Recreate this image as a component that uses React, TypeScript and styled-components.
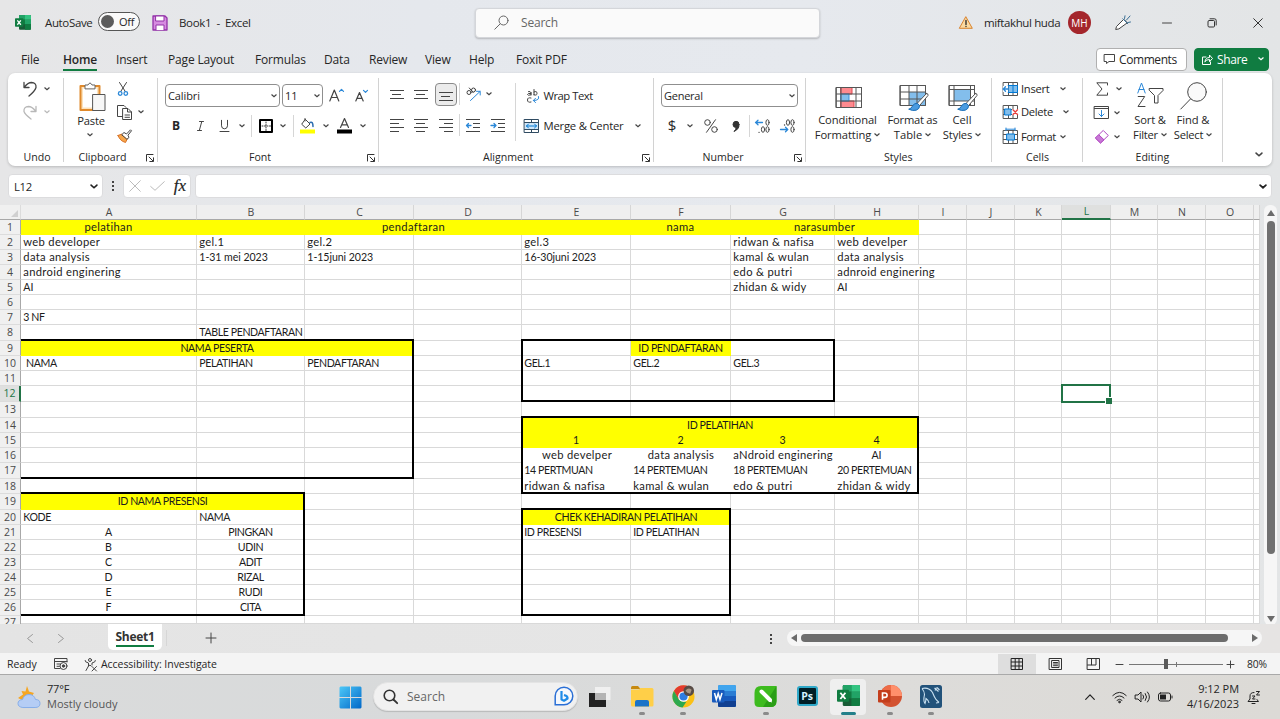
import React from "react";
import styled, { createGlobalStyle } from "styled-components";

const Global = createGlobalStyle`
  * { box-sizing: border-box; }
  html, body { margin: 0; padding: 0; }
  body {
    width: 1280px; height: 719px; overflow: hidden;
    font-family: "Open Sans", "Noto Sans", sans-serif;
    font-size: 11.5px; color: #262626; background: #e6e6e6;
  }
  svg { display: block; overflow: visible; flex: none; }
`;

/* ---------- shell ---------- */
const Window = styled.div`
  width: 1280px; height: 719px; display: flex; flex-direction: column;
  background: linear-gradient(90deg, #e6e6e7 0, #e5e8ed 420px, #e6e9ee 800px, #e3e5e6 1280px);
`;
const TitleBar = styled.header`
  height: 45px; display: grid; align-items: center; flex: none;
  grid-template-columns: 44px 54px 54px 27px 296px 484px 25px 84px 47px 33px 46px 46px 40px;
`;
const Lead = styled.div<{ $x?: number }>`
  display: flex; align-items: center; padding-left: ${(p) => p.$x ?? 0}px; white-space: nowrap;
`;
const Txt = styled.span<{ $s?: number; $ls?: number; $c?: string; $w?: number }>`
  font-size: ${(p) => p.$s ?? 11.5}px; letter-spacing: ${(p) => p.$ls ?? 0}px;
  color: ${(p) => p.$c ?? "#262626"}; font-weight: ${(p) => p.$w ?? 400};
  white-space: nowrap; line-height: 15px;
`;
const Toggle = styled.div`
  width: 42px; height: 19px; border: 1px solid #555; border-radius: 10px; background: #fafafa; margin-top: -2px;
  display: flex; align-items: center; padding-left: 2px; gap: 5px;
`;
const Knob = styled.i`width: 13px; height: 13px; border-radius: 50%; background: #5c5c5c;`;
const SearchBox = styled.div`
  width: 345px; height: 30px; background: #fafafa; border-radius: 4px; border: 1px solid #d4d6da;
  box-shadow: 0 1px 2px rgba(0,0,0,.22); display: flex; align-items: center; padding-left: 18px; gap: 12px;
`;
const Avatar = styled.div`
  width: 23px; height: 23px; border-radius: 50%; background: #a4262c; color: #fff;
  display: grid; place-items: center; font-size: 10px;
`;
const TabRow = styled.nav`
  height: 28px; flex: none; display: flex; padding-left: 21px; align-items: center;
`;
const Tab = styled.div<{ $w: number; $on?: boolean }>`
  width: ${(p) => p.$w}px; font-size: 12px; line-height: 18px; letter-spacing: -.17px; white-space: nowrap;
  font-weight: ${(p) => (p.$on ? 600 : 400)};
  span { display: inline-block; padding: 3px 0 0; height: 23px; border-bottom: 2px solid ${(p) => (p.$on ? "#107c41" : "transparent")}; }
`;
const TopButton = styled.div<{ $green?: boolean }>`
  height: 23px; width: ${(p) => (p.$green ? 75 : 91)}px; border-radius: 4px; display: flex; align-items: center;
  gap: 4px; padding-left: 7px; font-size: 12px; flex: none;
  margin-left: ${(p) => (p.$green ? 7 : 0)}px;
  border: 1px solid ${(p) => (p.$green ? "#107c41" : "#b0b0b0")};
  background: ${(p) => (p.$green ? "#107c41" : "#fff")}; color: ${(p) => (p.$green ? "#fff" : "#262626")};
`;
const Fill = styled.div`flex: 1;`;

/* ---------- ribbon ---------- */
const Ribbon = styled.section`
  height: 93px; margin: 0 8px; background: #fff; border-radius: 7px; flex: none; display: flex;
  box-shadow: 0 1px 3px rgba(0,0,0,.2); padding: 5px 0 4px;
`;
const Group = styled.div<{ $w: number }>`
  width: ${(p) => p.$w}px; height: 84px; border-right: 1px solid #d2d2d2; display: flex; flex-direction: column; flex: none;
`;
const GroupBody = styled.div`height: 72px; display: flex; flex: none;`;
const GroupFoot = styled.div<{ $l?: number }>`
  height: 15px; display: flex; flex: none; align-items: center; justify-content: space-between; padding: 0 3px 0 ${(p) => p.$l ?? 0}px;
  font-size: 10.6px; line-height: 15px; white-space: nowrap;
`;
const Col = styled.div<{ $w?: number; $t?: number; $center?: boolean }>`
  display: flex; flex-direction: column; flex: none; padding-top: ${(p) => p.$t ?? 0}px;
  width: ${(p) => (p.$w ? p.$w + "px" : "auto")}; align-items: ${(p) => (p.$center ? "center" : "stretch")};
`;
const Row = styled.div<{ $h: number; $l?: number }>`
  height: ${(p) => p.$h}px; display: flex; flex: none; align-items: center; padding-left: ${(p) => p.$l ?? 0}px;
`;
const Slot = styled.div<{ $w: number; $left?: boolean }>`
  width: ${(p) => p.$w}px; display: flex; align-items: center; flex: none; white-space: nowrap;
  justify-content: ${(p) => (p.$left ? "flex-start" : "center")};
`;
const Rule = styled.i<{ $h: number; $ml?: number }>`
  width: 1px; height: ${(p) => p.$h}px; background: #d6d6d6; flex: none; margin-left: ${(p) => p.$ml ?? 0}px;
`;
const Combo = styled.div<{ $w: number; $mr?: number }>`
  width: ${(p) => p.$w}px; height: 23px; border: 1px solid #8f8f8f; border-radius: 4px; background: #fff; flex: none;
  display: flex; align-items: center; justify-content: space-between; padding: 0 2px; margin-right: ${(p) => p.$mr ?? 0}px;
  font-size: 11px;
`;
const Pressed = styled.div`
  width: 22px; height: 23px; border: 1px solid #8a8a8a; border-radius: 4px; background: #ebebeb; display: grid; place-items: center; padding-top: 5px;
`;
const BigLabel = styled.div<{ $w: number }>`
  width: ${(p) => p.$w}px; height: 15px; display: flex; align-items: center; justify-content: center; gap: 3px;
  font-size: 11.2px; line-height: 15px; white-space: nowrap; flex: none;
`;
const RibbonEnd = styled.div`flex: 1; display: flex; align-items: flex-end; justify-content: flex-end; padding: 0 9px 5px 0;`;

/* ---------- formula bar ---------- */
const FormulaBar = styled.div`height: 39px; padding: 8px 8px 0; display: flex; flex: none; align-items: flex-start;`;
const Field = styled.div<{ $w: number }>`
  width: ${(p) => p.$w}px; height: 24px; background: #fff; border-radius: 4px; border: 1px solid #dcdcde;
  display: flex; align-items: center; justify-content: space-between; padding: 0 4px 0 5px; flex: none;
`;
const Fx = styled.span`font: italic 400 17px/20px "Liberation Serif", serif; color: #222; -webkit-text-stroke: .2px #222;`;
const Dots = styled.div<{ $h: number }>`
  height: ${(p) => p.$h}px; width: 20px; display: flex; flex-direction: column; gap: 2.4px; align-items: center; justify-content: center; flex: none;
  i { width: 2px; height: 2px; background: #444; }
`;

/* ---------- sheet ---------- */
const colWidths = [176, 108, 109, 108, 109, 100, 104, 84, 48, 48, 47, 49, 47, 48, 48, 6];
const rowHeights = [15, 15, 15, 15, 15, 15, 15, 16, 15, 15, 15, 16, 16, 15, 15, 15, 16, 15, 16, 15, 15, 15, 15, 15, 15, 16, 8];
const letters = "ABCDEFGHIJKLMNO".split("");

const SheetArea = styled.div`height: 419px; display: flex; flex: none;`;
const Grid = styled.div`
  width: 1260px; height: 419px; display: grid; overflow: hidden; background: #fff; flex: none;
  grid-template-columns: 21px ${colWidths.map((w) => w + "px").join(" ")};
  grid-template-rows: 15px ${rowHeights.map((h) => h + "px").join(" ")};
  font-family: Lato, "Open Sans", sans-serif; color: #1c1c1c;
`;
const Corner = styled.div`
  grid-area: 1 / 1; background: #f0f0f0; border-right: 1px solid #dcdcdc; border-bottom: 1px solid #a8a8a8;
  display: flex; align-items: flex-end; justify-content: flex-end; padding: 0 2px 2px 0;
`;
const Head = styled.div<{ $on?: boolean }>`
  background: ${(p) => (p.$on ? "#dfe0df" : "#efefef")}; color: ${(p) => (p.$on ? "#217346" : "#4a4a4a")};
  border-right: 1px solid #d6d6d6; border-bottom: ${(p) => (p.$on ? "2px solid #217346" : "1px solid #a8a8a8")};
  display: flex; justify-content: center; align-items: center; line-height: 13px; font-size: 10.5px; padding-left: 1px;
  font-family: "Open Sans", sans-serif;
`;
const RowHead = styled.div<{ $on?: boolean; $last?: boolean }>`
  background: ${(p) => (p.$on ? "#dfe0df" : "#f0f0f0")}; color: ${(p) => (p.$on ? "#217346" : "#4a4a4a")};
  border-bottom: ${(p) => (p.$last ? 0 : 1)}px solid #dcdcdc; border-right: ${(p) => (p.$on ? "2px solid #217346" : "1px solid #a8a8a8")};
  display: flex; justify-content: center; align-items: ${(p) => (p.$last ? "flex-start" : "center")};
  line-height: 13px; font-size: 10.5px;
  font-family: "Open Sans", sans-serif;
`;
const Blank = styled.div`border-right: 1px solid #d9d9d9; border-bottom: 1px solid #d9d9d9;`;
const Cell = styled.div<{ $align?: string; $pl?: number; $ls?: number; $s: number; $pb: number; $bg?: string; $inset?: boolean }>`
  display: flex; align-items: center; line-height: 13px; white-space: pre; z-index: 1; font-size: ${(p) => p.$s}px;
  justify-content: ${(p) => (p.$align === "c" ? "center" : "flex-start")};
  padding: 0 ${(p) => (p.$align === "c" ? 1 : 0)}px ${(p) => p.$pb - (p.$inset ? 1 : 0)}px ${(p) => p.$pl ?? (p.$align === "c" ? 0 : 2.3)}px;
  letter-spacing: ${(p) => p.$ls ?? 0}px;
  background: ${(p) => p.$bg ?? "transparent"};
  ${(p) => (p.$inset ? "margin: 0 1px 1px 0;" : "")}
`;
const Box = styled.div<{ $open?: boolean }>`
  border: 2px solid #000; z-index: 2; margin: -2px 0 0 -1px; ${(p) => (p.$open ? "border-left: 0; margin-left: 0;" : "")}
`;
const Selected = styled.div`
  border: 2px solid #217346; margin: -2px 0 -1px -1px; z-index: 3; position: relative;
  &::after { content: ""; position: absolute; right: -3px; bottom: -3px; width: 6px; height: 6px; background: #217346; border: solid #fff; border-width: 1px 0 0 1px; }
`;
const VScroll = styled.div`
  width: 13px; height: 420px; margin-left: 4px; border-radius: 6px; background: #f6f6f6; display: flex; flex-direction: column; align-items: center;
  padding: 5px 0 3px; justify-content: space-between;
`;
const VThumb = styled.i`width: 8px; height: 333px; border-radius: 4px; background: #707070; margin: 5px 0 auto;`;

type C = { r: number; c: number; cs?: number; t: string; a?: string; y?: boolean; w?: boolean; pl?: number; inset?: boolean };
const cells: C[] = [
  { r: 1, c: 1, t: "pelatihan", a: "c", y: true },
  { r: 1, c: 2, cs: 4, t: "pendaftaran", a: "c", y: true },
  { r: 1, c: 6, t: "nama", a: "c", y: true },
  { r: 1, c: 7, cs: 2, t: "narasumber", a: "c", y: true },
  { r: 2, c: 1, t: "web developer" }, { r: 3, c: 1, t: "data analysis" },
  { r: 4, c: 1, t: "android enginering" }, { r: 5, c: 1, t: "AI" },
  { r: 2, c: 2, t: "gel.1" }, { r: 3, c: 2, t: "1-31 mei 2023" },
  { r: 2, c: 3, t: "gel.2" }, { r: 3, c: 3, t: "1-15juni 2023" },
  { r: 2, c: 5, t: "gel.3" }, { r: 3, c: 5, t: "16-30juni 2023" },
  { r: 2, c: 7, t: "ridwan & nafisa" }, { r: 3, c: 7, t: "kamal & wulan" },
  { r: 4, c: 7, t: "edo & putri" }, { r: 5, c: 7, t: "zhidan & widy" },
  { r: 2, c: 8, t: "web develper" }, { r: 3, c: 8, t: "data analysis" },
  { r: 4, c: 8, cs: 2, t: "adnroid enginering", w: true, inset: true }, { r: 5, c: 8, t: "AI" },
  { r: 7, c: 1, t: "3 NF" }, { r: 8, c: 2, t: "TABLE PENDAFTARAN" },
  { r: 9, c: 1, cs: 3, t: "NAMA PESERTA", a: "c", y: true },
  { r: 10, c: 1, t: "NAMA", pl: 5 }, { r: 10, c: 2, t: "PELATIHAN" }, { r: 10, c: 3, t: "PENDAFTARAN" },
  { r: 9, c: 6, t: "ID PENDAFTARAN", a: "c", y: true },
  { r: 10, c: 5, t: "GEL.1" }, { r: 10, c: 6, t: "GEL.2" }, { r: 10, c: 7, t: "GEL.3" },
  { r: 14, c: 5, cs: 4, t: "ID PELATIHAN", a: "c", y: true },
  { r: 15, c: 5, t: "1", a: "c", y: true }, { r: 15, c: 6, t: "2", a: "c", y: true },
  { r: 15, c: 7, t: "3", a: "c", y: true }, { r: 15, c: 8, t: "4", a: "c", y: true },
  { r: 16, c: 5, t: "web develper", a: "c", w: true, pl: 2 }, { r: 16, c: 6, t: "data analysis", a: "c", w: true, pl: 1 },
  { r: 16, c: 7, t: "aNdroid enginering", w: true }, { r: 16, c: 8, t: "AI", a: "c", w: true },
  { r: 17, c: 5, t: "14 PERTMUAN", w: true }, { r: 17, c: 6, t: "14 PERTEMUAN", w: true },
  { r: 17, c: 7, t: "18 PERTEMUAN", w: true }, { r: 17, c: 8, t: "20 PERTEMUAN", w: true },
  { r: 18, c: 5, t: "ridwan & nafisa", w: true }, { r: 18, c: 6, t: "kamal & wulan", w: true },
  { r: 18, c: 7, t: "edo & putri", w: true }, { r: 18, c: 8, t: "zhidan & widy", w: true },
  { r: 19, c: 1, cs: 2, t: "ID NAMA PRESENSI", a: "c", y: true },
  { r: 20, c: 1, t: "KODE" }, { r: 20, c: 2, t: "NAMA" },
  ...["A", "B", "C", "D", "E", "F"].map((t, i) => ({ r: 21 + i, c: 1, t, a: "c" })),
  ...["PINGKAN", "UDIN", "ADIT", "RIZAL", "RUDI", "CITA"].map((t, i) => ({ r: 21 + i, c: 2, t, a: "c" })),
  { r: 20, c: 5, cs: 2, t: "CHEK KEHADIRAN PELATIHAN", a: "c", y: true },
  { r: 21, c: 5, t: "ID PRESENSI" }, { r: 21, c: 6, t: "ID PELATIHAN" },
];
const boxes = [
  { a: "10 / 2 / 19 / 5", open: true },
  { a: "20 / 2 / 28 / 4", open: true },
  { a: "10 / 6 / 14 / 9" },
  { a: "15 / 6 / 20 / 10" },
  { a: "21 / 6 / 28 / 8" },
];

/* ---------- bottom ---------- */
const SheetTabs = styled.div`height: 29px; flex: none; display: flex; background: linear-gradient(90deg, #e4e4e4, #e6e6e6 60%, #e6e4e3);`;
const SheetTab = styled.div`
  width: 54px; height: 26px; background: #fff; border-radius: 0 0 5px 5px; display: flex; justify-content: center;
  font-size: 12px; font-weight: 700; letter-spacing: -.3px; color: #333;
  span { height: 23px; line-height: 25px; border-bottom: 2px solid #107c41; }
`;
const HTrack = styled.div`
  width: 475px; height: 16px; border-radius: 8px; background: #f6f6f6; display: flex; align-items: center; margin: 6px 0 0 6px; padding: 0 4px 0 4px; gap: 4px;
`;
const HThumb = styled.i`width: 427px; height: 8px; border-radius: 4px; background: #6d6d6d; margin-right: auto;`;
const StatusBar = styled.div`
  height: 22px; flex: none; background: #f4f4f4; border-bottom: 1px solid #a9a9a9; display: flex; align-items: center; padding: 1px 0 0 7px;
`;
const ViewCell = styled.div<{ $on?: boolean }>`
  width: 38px; height: 20px; display: grid; place-items: center; background: ${(p) => (p.$on ? "#dedede" : "transparent")};
`;
const ZoomTrack = styled.div`
  width: 94px; height: 12px; display: flex; align-items: center; background: linear-gradient(#777, #777) center / 100% 1px no-repeat; margin: 0 4px 0 3px; padding-left: 35px; gap: 8px;
  i { width: 4px; height: 10px; background: #5a5a5a; }
  b { width: 1px; height: 5px; background: #777; }
`;
const TaskBar = styled.footer`
  flex: 1; display: flex; align-items: center; background: linear-gradient(90deg, #dadbdb, #d8dadb 35%, #dddcda 70%, #dcdad6); height: 44px;
`;
const Weather = styled.div`width: 338.5px; height: 44px; display: flex; padding-left: 17px; align-items: center;`;
const Pill = styled.div`
  width: 205px; height: 29px; margin-left: 11.5px; border-radius: 15px; background: #f1f1f1; border: 1px solid #e4e4e4; box-shadow: 0 1px 1px rgba(0,0,0,.15);
  display: flex; align-items: center; padding: 0 3px 0 9px; margin-bottom: 2px;
`;
const AppSlot = styled.div`
  width: 41.35px; height: 44px; display: flex; flex-direction: column; align-items: center; flex: none; padding-top: 4px;
`;
const Tile = styled.div<{ $active?: boolean }>`
  width: 36px; height: 36px; border-radius: 4px; background: ${(p) => (p.$active ? "#efefef" : "transparent")};
  display: flex; flex-direction: column; align-items: center; justify-content: space-between; padding-top: 6px; flex: none;
`;
const Mark = styled.i<{ $k?: number }>`
  width: ${(p) => (p.$k === 2 ? 15 : 6)}px; height: 3px; border-radius: 2px;
  background: ${(p) => (p.$k === 2 ? "#23808a" : p.$k === 1 ? "#8a8a8a" : "transparent")};
`;
const Clock = styled.div`width: 60px; padding-bottom: 2px; display: flex; flex-direction: column; align-items: flex-end;`;

/* ---------- icons ---------- */
type IP = { w: number; h: number; children: React.ReactNode };
const I = ({ w, h, children }: IP) => (
  <svg width={w} height={h} viewBox={`0 0 ${w} ${h}`} fill="none" stroke="#444" strokeWidth="1" strokeLinecap="round" strokeLinejoin="round">{children}</svg>
);
const Chev = ({ c = "#444", w = 6, s = 1.2 }: { c?: string; w?: number; s?: number }) => (
  <svg width={w} height={w * 0.6} viewBox="0 0 6 3.6" fill="none" stroke={c} strokeWidth={s} strokeLinecap="round"><path d="M.8.8 3 2.800 5.200.8" /></svg>
);
const Launcher = () => <I w={8} h={8}><path d="M.5 7V.5H7M3 3l4 4M7.5 3.8v3.7H3.8" stroke="#333" /></I>;
const ExcelIcon = ({ s }: { s: number }) => (
  <svg width={s} height={s * 0.92} viewBox="0 0 24 22">
    <rect x="6" y="0" width="18" height="22" rx="1.5" fill="#185c37" />
    <path d="M7.500 0H15v7H6V1.500Q6 0 7.500 0z" fill="#21a366" /><path d="M15 0h7.500Q24 0 24 1.500V7h-9z" fill="#33c481" />
    <path d="M6 7h9v7H6z" fill="#107c41" /><path d="M15 7h9v7h-9z" fill="#21a366" /><path d="M15 14h9v6.500q0 1.500-1.500 1.500H15z" fill="#107c41" />
    <rect x="0" y="5" width="12.500" height="12.500" rx="1" fill="#107c41" />
    <path d="M3.500 8l5.300 6.600M8.800 8l-5.300 6.600" stroke="#fff" strokeWidth="1.900" fill="none" />
  </svg>
);
const LinesIcon = ({ rows, mode }: { rows: number[]; mode: "l" | "c" | "r" }) => (
  <I w={14} h={(rows.length - 1) * 4 + 1}>
    {rows.map((r, i) => {
      const x = mode === "l" ? 0 : mode === "c" ? Math.floor((14 - r) / 2) : 14 - r;
      return <path key={i} d={`M${x} ${i * 4 + 0.5}h${r}`} strokeLinecap="butt" />;
    })}
  </I>
);
const Indent = ({ out }: { out?: boolean }) => (
  <I w={14} h={13}>
    <path d="M7 .5h7M7 4.500h7M7 8.500h7M0 12.500h14M0 .5h7" strokeLinecap="butt" />
    {out ? <path d="M.5 6.500h4.500M2.500 4.500l-2 2 2 2" stroke="#2b88d8" strokeWidth="1.300" /> : <path d="M0 6.500h5M3 4.500l2 2-2 2" stroke="#2b88d8" strokeWidth="1.300" />}
  </I>
);
const Decimals = ({ inc }: { inc?: boolean }) => (
  <I w={15} h={14}>
    {!inc && <ellipse cx="8" cy="3.500" rx="1.600" ry="2.800" />}
    <ellipse cx="12.500" cy="3.500" rx="1.600" ry="2.800" />
    <ellipse cx="12.500" cy="10.500" rx="1.600" ry="2.800" />
    {inc ? <><ellipse cx="8" cy="10.500" rx="1.600" ry="2.800" /><path d="M4 13.300h.1" strokeWidth="1.300" /><path d="M.5 3.500h7M3 1.300L.7 3.500 3 5.700" stroke="#2b88d8" strokeWidth="1.300" /></>
      : <><path d="M4.500 6h.1" strokeWidth="1.300" /><path d="M.5 10.500h7M5.500 8.300l2.300 2.200-2.300 2.200" stroke="#2b88d8" strokeWidth="1.300" /></>}
  </I>
);
const CellsIcon = ({ k }: { k: number }) => (
  <I w={15} h={14}>
    <path d="M.5 .5h14v13H.5zM.5 4.500h14M.5 9.500h14M5.500 .5v13M10 .5v13" stroke="#555" />
    {k === 0 && <><path d="M5.500 3.500h9v7h-9z" fill="#83beec" stroke="#0078d4" /><path d="M10 3.500v7" stroke="#0078d4" /><path d="M0 4h5v6H0z" fill="#fff" stroke="none" /><path d="M0 7h5M2.500 4.800L.3 7l2.200 2.200" stroke="#2b88d8" strokeWidth="1.300" /></>}
    {k === 1 && <><path d="M2 4h6v6H2z" fill="#83beec" stroke="#0078d4" /><path d="M9 4h6v6H9z" fill="#fff" stroke="none" /><path d="M10 4.800l4.500 4.700M14.500 4.800l-4.500 4.700" stroke="#e8403c" strokeWidth="1.300" /></>}
    {k === 2 && <><path d="M4 4h7.500v6H4z" fill="#83beec" stroke="#0078d4" /><path d="M3 -.8h9M3-2v2.500M12-2v2.500" stroke="#2b88d8" /></>}
  </I>
);
const Brush = () => (
  <><path d="M26.500 8.500 17 18.500l2.500 2.200L28 10.500q.6-2.200-1.500-2z" fill="#fff" stroke="#555" />
    <path d="M17 18.300q-3-.4-4.500 2.700-1.200 2.700-3.800 3.200 4 2 7.500 1 3.600-1.200 3.400-4.400z" fill="#4a9be0" stroke="#1a6fb8" /></>
);

const Title = () => (
  <TitleBar>
    <Lead $x={14.5}><ExcelIcon s={16} /></Lead>
    <Lead $x={1}><Txt $ls={-0.35}>AutoSave</Txt></Lead>
    <Lead><Toggle><Knob /><Txt $s={11} $ls={-0.2}>Off</Txt></Toggle></Lead>
    <I w={16} h={16}><path d="M1 1h12l2 2v12H1z" fill="#d68ce0" stroke="#9332a8" strokeWidth="1.300" /><path d="M4 1h8v5H4zM4 15v-5h8v5" fill="#fff" stroke="#9332a8" /></I>
    <Txt $ls={-0.35}>Book1&nbsp; -&nbsp; Excel</Txt>
    <SearchBox>
      <I w={15} h={15}><circle cx="9.500" cy="5.500" r="4.500" stroke="#666" /><path d="M6.200 8.800.8 14.200" stroke="#666" /></I>
      <Txt $s={12} $ls={-0.2} $c="#666">Search</Txt>
    </SearchBox>
    <I w={14} h={13}><path d="M7 1 13.300 12.300H.7z" fill="#fbd9a0" stroke="#d9822b" /><path d="M7 4.500v4M7 10.300v.3" stroke="#222" strokeWidth="1.300" /></I>
    <Txt $ls={-0.38}>miftakhul huda</Txt>
    <Avatar>MH</Avatar>
    <I w={16} h={15}><path d="M8.500 4.500 1.500 11.500l-.8 3 3.200-.6L12 8z" fill="#fff" /><path d="M7.800 3.800 12.800 8.800M9.500 3.500 10 .8M13 7.500l2.500-.5M11.500 5 15 1" stroke="#3a6f96" /></I>
    <Lead $x={14}><I w={10} h={2}><path d="M.5 1h9" /></I></Lead>
    <Lead $x={13}><I w={10} h={10}><path d="M1 3.500q0-1 1-1h4.500q1 0 1 1V8q0 1-1 1H2q-1 0-1-1zM3 .8h4.500q1.700 0 1.700 1.700V7" stroke="#333" /></I></Lead>
    <Lead $x={12.5}><I w={10} h={10}><path d="M.7.7l8.600 8.600M9.300.7.7 9.300" stroke="#333" /></I></Lead>
  </TitleBar>
);

const Tabs = () => (
  <TabRow>
    {([["File", 42], ["Home", 53], ["Insert", 52], ["Page Layout", 87], ["Formulas", 69], ["Data", 45], ["Review", 56], ["View", 44], ["Help", 47], ["Foxit PDF", 80]] as [string, number][]).map(([t, w]) => (
      <Tab key={t} $w={w} $on={t === "Home"}><span>{t}</span></Tab>
    ))}
    <Fill />
    <TopButton><I w={11} h={10}><path d="M.5.5h10v7H5L2.500 9.500v-2h-2z" /></I><Txt $s={12} $ls={-0.42}>Comments</Txt></TopButton>
    <TopButton $green><I w={11} h={11}><path d="M4 3H.5v7.500h8V8M3 7.500Q3.500 3.500 7.500 3.500V1l3 3.500-3 3.200V5.500Q4.500 5.500 3 7.500z" stroke="#fff" /></I><Txt $s={12} $c="#fff" $ls={-0.4}>Share</Txt><Slot $w={20}><Chev c="#fff" /></Slot></TopButton>
    <Slot $w={11}>{null}</Slot>
  </TabRow>
);

const RibbonView = () => (
  <Ribbon>
    <Group $w={56}>
      <GroupBody>
        <Col>
          <Row $h={21} $l={14}><Slot $w={16}><I w={14} h={16}><path d="M1 1.500v5h5M1.300 6.200Q5 1.500 8.500 1.500q5 .3 4.500 5Q12 10 6 15" strokeWidth="1.300" /></I></Slot><Slot $w={18}><Chev /></Slot></Row>
          <Row $h={26} $l={14}><Slot $w={16}><I w={14} h={15}><path d="M13 1.500v5H8M12.700 6.200Q9 1.500 5.500 1.500q-5 .3-4.500 5Q2 9.500 8 14" stroke="#b8b8b8" strokeWidth="1.300" /></I></Slot><Slot $w={18}><Chev c="#b8b8b8" /></Slot></Row>
        </Col>
      </GroupBody>
      <GroupFoot $l={15.5}>Undo</GroupFoot>
    </Group>
    <Group $w={94}>
      <GroupBody>
        <Col $w={46} $t={2} $center>
          <Row $h={33} $l={11}><I w={27} h={30}>
            <path d="M1.500 4h19v24h-19z" fill="#fde3bd" stroke="#e08a2c" strokeWidth="2" /><path d="M4 6.500h14v19H4z" fill="#fff" stroke="none" />
            <path d="M6 6.500V3h3q2-4 4 0h3v3.500z" fill="#fff" stroke="#666" /><path d="M14 12.500h12v16H14z" fill="#f7f7f7" stroke="#555" />
          </I></Row>
          <Row $h={15} $l={8}><Txt $s={11.2} $ls={-0.2}>Paste</Txt></Row>
          <Row $h={14} $l={6}><Chev /></Row>
        </Col>
        <Col>
          <Row $h={21} $l={5}><Slot $w={16}><I w={10} h={14}><path d="M1.500.5 7.300 9.500M8.500.5 2.700 9.500" /><circle cx="2.200" cy="11.500" r="1.800" stroke="#2b88d8" strokeWidth="1.300" /><circle cx="7.800" cy="11.500" r="1.800" stroke="#2b88d8" strokeWidth="1.300" /></I></Slot></Row>
          <Row $h={26} $l={6}><Slot $w={16}><I w={15} h={15}><path d="M5.500 11.500h-5V.5h6.500l2 2M6 3.500h5L14.500 7v7.500H6zM10.500 3.500V7h4M8 10h4.500M8 12.300h4.500" /></I></Slot><Slot $w={18}><Chev /></Slot></Row>
          <Row $h={22} $l={6}><Slot $w={16}><I w={15} h={14}><path d="M1 6.500 5 5l5.500 4.500L8.500 13.500Q3 12 1 6.500z" fill="#f7a64a" stroke="#d9742b" /><path d="M5 5.500 7 3.500l2.500 1.500L13.500.8l1 1L11 6.200l1 2.300-1.800 1.500z" fill="#fff" /></I></Slot></Row>
        </Col>
      </GroupBody>
      <GroupFoot $l={14.5}>Clipboard<Launcher /></GroupFoot>
    </Group>
    <Group $w={221}>
      <GroupBody>
        <Col $t={6}>
          <Row $h={23} $l={7}>
            <Combo $w={115} $mr={2}><Txt $s={11} $ls={-0.1}>Calibri</Txt><Chev /></Combo>
            <Combo $w={41}><Txt $s={11}>11</Txt><Chev /></Combo>
            <Slot $w={27}><I w={15} h={14}><path d="M.8 12 5.300 1l4.500 11M2.300 8.500h6" strokeWidth="1.200" /><path d="M10.500 2.300l2-2 2 2" stroke="#2b88d8" strokeWidth="1.200" /></I></Slot>
            <Slot $w={22}><I w={13} h={12}><path d="M.8 11 4.500 2.500l3.700 8.500M2 8.300h5" strokeWidth="1.200" /><path d="M8.500.3l2 2 2-2" stroke="#2b88d8" strokeWidth="1.200" /></I></Slot>
          </Row>
          <Row $h={37} $l={6}>
            <Slot $w={24}><Txt $s={12} $w={700}>B</Txt></Slot>
            <Slot $w={24}><I w={7} h={10}><path d="M2.500.5h4M.5 9.500h4M4.800.5 2.300 9.500" /></I></Slot>
            <Slot $w={24}><I w={9} h={12}><path d="M1.500.3v5.500q.2 3 3 3t3-3V.3M0 11.500h9" /></I></Slot>
            <Slot $w={12}><Chev /></Slot>
            <Rule $h={22} $ml={3} />
            <Slot $w={27}><I w={14} h={14}><path d="M1 1h12v12H1z" stroke="#000" strokeWidth="2" /><path d="M7 3v9M3 7h9" strokeDasharray="1 1.500" stroke="#333" /></I></Slot>
            <Slot $w={8}><Chev /></Slot>
            <Rule $h={22} $ml={6} />
            <Slot $w={27}><I w={15} h={16}><path d="M0 11.500h15v4H0z" fill="#ff0" stroke="none" /><path d="M5.500 1.500 10 6 5.800 10 2 6.500zM5 3V.5" fill="#fff" /><path d="M10 4.500q3-1.500 3 4" stroke="#2b6cb0" strokeWidth="1.500" /></I></Slot>
            <Slot $w={9}><Chev /></Slot>
            <Slot $w={29}><I w={15} h={16}><path d="M0 11.500h15v4H0z" fill="#000" stroke="none" /><path d="M3.500 9.500 7.500.5l4 9M5 6.800h5" strokeWidth="1.200" /></I></Slot>
            <Slot $w={8}><Chev /></Slot>
          </Row>
        </Col>
      </GroupBody>
      <GroupFoot $l={91}>Font<Launcher /></GroupFoot>
    </Group>
    <Group $w={275}>
      <GroupBody>
        <Col $t={6} $w={136}>
          <Row $h={20} $l={6}>
            <Slot $w={24}><Row $h={14}><LinesIcon rows={[14, 9, 14]} mode="c" /></Row></Slot>
            <Slot $w={24}><Row $h={14}><LinesIcon rows={[14, 9, 14]} mode="c" /></Row></Slot>
            <Slot $w={26}><Row $h={17}><Pressed><LinesIcon rows={[14, 9, 14]} mode="c" /></Pressed></Row></Slot>
            <Rule $h={22} />
            <Slot $w={26}><I w={15} h={14}><circle cx="3" cy="5.500" r="2" /><path d="M3.300 1 7 5.500" /><circle cx="7.500" cy="3" r="2" /><path d="M4.500 13.500 14 4.500M10.500 4.300h3.700V8" stroke="#2b88d8" /></I></Slot>
            <Slot $w={5}><Chev /></Slot>
          </Row>
          <Row $h={42} $l={6}>
            <Slot $w={24}><LinesIcon rows={[14, 9, 14, 9]} mode="l" /></Slot>
            <Slot $w={24}><LinesIcon rows={[14, 9, 14, 9]} mode="c" /></Slot>
            <Slot $w={26}><LinesIcon rows={[14, 9, 14, 9]} mode="r" /></Slot>
            <Rule $h={22} />
            <Slot $w={26}><Indent out /></Slot>
            <Slot $w={24}><Indent /></Slot>
          </Row>
        </Col>
        <Col $t={5}><Rule $h={58} /></Col>
        <Col $t={6}>
          <Row $h={23} $l={8}>
            <Slot $w={19.5} $left><Lead $x={2}><I w={15} h={14}><path d="M5 3.500V6M5 3.500Q4.500 2 2.500 2.500M5 4.500Q1.500 4 1.500 5.500t3.500.3M8 .5V6M8 3q3-1.500 3 1.300T8 5.700M5 9Q1.500 8 1.500 11T5 13" /><path d="M12.500 7.500q1.500 4-5 4M9.500 9.300l-2.200 2.200 2.200 2" stroke="#2b88d8" /></I></Lead></Slot><Txt $s={11.3} $ls={-0.5}>Wrap Text</Txt>
          </Row>
          <Row $h={37} $l={8}>
            <Slot $w={19.5} $left><I w={15} h={14}><path d="M1 4h13v6H1z" fill="#cfe6f8" stroke="none" /><path d="M.5.5h14v13H.5zM7.500.5v3M7.500 10.500v3M.5 3.500h14M.5 10.500h14" stroke="#2f4b62" /><path d="M2.500 7h10M4.500 5l-2 2 2 2M10.500 5l2 2-2 2" stroke="#0078d4" /></I></Slot><Slot $w={91} $left><Txt $s={11.3} $ls={-0.22}>Merge &amp; Center</Txt></Slot><Chev />
          </Row>
        </Col>
      </GroupBody>
      <GroupFoot $l={104}>Alignment<Launcher /></GroupFoot>
    </Group>
    <Group $w={152}>
      <GroupBody>
        <Col $t={6}>
          <Row $h={23} $l={7}><Combo $w={137}><Txt $s={11} $ls={-0.25}>General</Txt><Chev /></Combo></Row>
          <Row $h={37} $l={8}>
            <Slot $w={20}><Txt $s={15}>$</Txt></Slot><Slot $w={15}><Chev /></Slot>
            <Slot $w={28}><I w={14} h={14}><circle cx="3.500" cy="3.500" r="2.800" /><circle cx="10.500" cy="10.500" r="2.800" /><path d="M11.500.7 2.500 13.300" /></I></Slot>
            <Slot $w={22}><I w={8} h={12}><path d="M7 4.500Q7.500 9 2 11.500q2-2 2.200-4-3.200 0-3.200-3T4 1.300t3 3.200z" fill="#333" stroke="#333" /></I></Slot>
            <Rule $h={22} $ml={2} />
            <Slot $w={25}><Decimals inc /></Slot><Slot $w={25}><Decimals /></Slot>
          </Row>
        </Col>
      </GroupBody>
      <GroupFoot $l={48.5}>Number<Launcher /></GroupFoot>
    </Group>
    <Group $w={186}>
      <GroupBody>
        <Col $w={83} $t={5} $center>
          <Row $h={29} $l={2}><Row $h={25}><I w={26} h={22}><path d="M.5.5h25v20H.5z" fill="#fff" /><path d="M5 .5h11v6.500H5zM5 14h13v6.500H5z" fill="#ff8a8f" stroke="#e0484e" /><path d="M5 7h8v7H5z" fill="#83beec" stroke="#3a8fd8" /><path d="M.5 7h25M.5 14h25M5 .5v20M20 .5v20M.5.5h25v20H.5z" stroke="#555" /></I></Row></Row>
          <BigLabel $w={80}><Txt $s={11.2} $ls={-0.1}>Conditional</Txt></BigLabel><BigLabel $w={80}><Txt $s={11.2} $ls={-0.1}>Formatting</Txt><Chev /></BigLabel>
        </Col>
        <Col $w={47} $t={5} $center>
          <Row $h={29} $l={3}><I w={29} h={26}><path d="M.5.5h25v20H.5z" fill="#fff" /><path d="M9 7h16.500v13.500H9z" fill="#83beec" stroke="none" /><path d="M.5.5h25v20H.5zM.5 7h25M.5 14h25M9 .5v20M17 .5v20" stroke="#555" /><Brush /></I></Row>
          <BigLabel $w={50}><Txt $s={11.2} $ls={-0.25}>Format as</Txt></BigLabel><BigLabel $w={50}>Table<Chev /></BigLabel>
        </Col>
        <Col $w={52} $t={5} $center>
          <Row $h={29} $l={3}><I w={29} h={26}><path d="M.5.5h25v20H.5z" fill="#fff" /><path d="M5 4.500h16.500V16H5z" fill="#83beec" stroke="none" /><path d="M.5.5h25v20H.5zM.5 4.500h25M.5 16h25M5 .5v20M21.500.5v20" stroke="#555" /><Brush /></I></Row>
          <BigLabel $w={48}>Cell</BigLabel><BigLabel $w={48}><Txt $s={11.2} $ls={-0.1}>Styles</Txt><Chev /></BigLabel>
        </Col>
      </GroupBody>
      <GroupFoot $l={78}>Styles</GroupFoot>
    </Group>
    <Group $w={91}>
      <GroupBody>
        <Col>
          {([["Insert", 39], ["Delete", 42], ["Format", 39]] as [string, number][]).map(([t, w], i) => (
            <Row key={t} $h={i ? 25 : 21} $l={11}><Slot $w={18} $left><CellsIcon k={i} /></Slot><Slot $w={w} $left><Txt $s={11.2} $ls={i === 2 ? -0.5 : -0.3}>{t}</Txt></Slot><Chev /></Row>
          ))}
        </Col>
      </GroupBody>
      <GroupFoot $l={34}>Cells</GroupFoot>
    </Group>
    <Group $w={140}>
      <GroupBody>
        <Col $w={47}>
          <Row $h={21} $l={10}><Slot $w={17}><I w={12} h={14}><path d="M11.500 3V.8H.8L6 7 .8 13.200h10.700V11" /></I></Slot><Slot $w={18}><Chev /></Slot></Row>
          <Row $h={27} $l={10}><Slot $w={17}><I w={15} h={13}><path d="M.5.5h14v12H.5zM.5 2.500h14" /><path d="M7.500 4.500v6M5 8l2.500 2.500L10 8" stroke="#2b88d8" /></I></Slot><Slot $w={14}><Chev /></Slot></Row>
          <Row $h={22} $l={10}><Slot $w={17}><I w={14} h={14}><path d="M8.500.7 13.300 5.500 5.500 13 .7 8.300z" fill="#fff" stroke="#b146c2" /><path d="M4 5 9 9.800 5.500 13 .7 8.300z" fill="#c878d6" stroke="#b146c2" /></I></Slot><Slot $w={14}><Chev /></Slot></Row>
        </Col>
        <Col $w={40} $t={2} $center>
          <Row $h={32}><I w={27} h={26}><path d="M.8 10 4.500 0 8.200 10M2 6.500h5" stroke="#2b88d8" /><path d="M1.200 13.500h6.500L1 23.500h7" /><path d="M12.500 5.500h13.500v2l-5 5v7.500h-3.500v-7.500l-5-5z" /></I></Row>
          <BigLabel $w={42}><Txt $s={11.2} $ls={-0.2}>Sort &amp;</Txt></BigLabel><BigLabel $w={42}><Txt $s={11.2} $ls={-0.25}>Filter</Txt><Chev /></BigLabel>
        </Col>
        <Col $w={46} $t={2} $center>
          <Row $h={32}><I w={27} h={28}><circle cx="17" cy="10" r="9.300" fill="#fafafa" /><path d="M10.500 17 .8 27" /></I></Row>
          <BigLabel $w={45}><Txt $s={11.2} $ls={-0.1}>Find &amp;</Txt></BigLabel><BigLabel $w={45}><Txt $s={11.2} $ls={-0.25}>Select</Txt><Chev /></BigLabel>
        </Col>
      </GroupBody>
      <GroupFoot $l={52.5}>Editing</GroupFoot>
    </Group>
    <RibbonEnd><Chev w={8} s={1.200} /></RibbonEnd>
  </Ribbon>
);

const Formula = () => (
  <FormulaBar>
    <Field $w={95}><Txt $s={11.300} $ls={-0.3}>L12</Txt><Chev w={8} c="#222" /></Field>
    <Dots $h={24}><i /><i /><i /></Dots>
    <Field $w={68}>
      <I w={12} h={12}><path d="M.7.7l10.600 10.600M11.300.7.7 11.300" stroke="#bcbcbc" /></I>
      <I w={15} h={10}><path d="M.7 5.500 5 9.300 14.300.7" stroke="#bcbcbc" /></I>
      <Fx>fx</Fx>
    </Field>
    <Slot $w={4}>{null}</Slot>
    <Field $w={1077}><span /><Chev w={8} s={1.300} c="#222" /></Field>
  </FormulaBar>
);

/* Capitals and digits run narrower than lower-case words in the cells. */
const metrics = (t: string) => {
  if (t === t.toUpperCase()) return { s: 10.6, ls: t.length > 2 ? -0.4 : 0, pb: 0 };
  if (/\d{4}/.test(t)) return { s: 10.6, ls: -0.06, pb: 1 };
  return { s: 11.2, ls: 0.33, pb: 2 };
};
const Sheet = () => (
  <SheetArea>
    <Grid>
      <Corner><I w={7} h={7}><path d="M7 0v7H0z" fill="#d0d0d0" stroke="none" /></I></Corner>
      {colWidths.map((_, i) => <Head key={i} $on={i === 11} style={{ gridArea: `1 / ${i + 2}` }}>{letters[i]}</Head>)}
      {rowHeights.map((_, i) => <RowHead key={i} $on={i === 11} $last={i === 26} style={{ gridArea: `${i + 2} / 1` }}>{i + 1}</RowHead>)}
      {rowHeights.map((_, r) => colWidths.map((__, c) => <Blank key={r + "-" + c} style={{ gridArea: `${r + 2} / ${c + 2}` }} />))}
      {cells.map((k, i) => {
        const m = metrics(k.t);
        return (
          <Cell key={i} $align={k.a} $pl={k.pl} $s={m.s} $ls={m.ls} $pb={m.pb || 1} $inset={k.inset} $bg={k.y ? "#ffff00" : k.w ? "#fff" : undefined}
            style={{ gridArea: `${k.r + 1} / ${k.c + 1} / span 1 / span ${k.cs ?? 1}` }}>{k.t}</Cell>
        );
      })}
      {boxes.map((b) => <Box key={b.a} $open={b.open} style={{ gridArea: b.a }} />)}
      <Selected style={{ gridArea: "13 / 13" }} />
    </Grid>
    <VScroll>
      <I w={8} h={6}><path d="M4 0 8 6H0z" fill="#6b6b6b" stroke="none" /></I>
      <VThumb />
      <I w={8} h={6}><path d="M4 6 8 0H0z" fill="#6b6b6b" stroke="none" /></I>
    </VScroll>
  </SheetArea>
);

const Bottom = () => (
  <>
    <SheetTabs>
      <Row $h={28} $l={27}>
        <Slot $w={31} $left><I w={6} h={9}><path d="M5.500.5l-5 4 5 4" stroke="#999" /></I></Slot>
        <Slot $w={50} $left><I w={6} h={9}><path d="M.5.5l5 4-5 4" stroke="#999" /></I></Slot>
      </Row>
      <SheetTab><span>Sheet1</span></SheetTab>
      <Row $h={28} $l={4}><Rule $h={16} /><Slot $w={88}><I w={10} h={10}><path d="M5 0v10M0 5h10" /></I></Slot></Row>
      <Fill />
      <Dots $h={30}><i /><i /><i /></Dots>
      <HTrack><I w={6} h={8}><path d="M6 0v8L0 4z" fill="#6b6b6b" stroke="none" /></I><HThumb /><I w={6} h={8}><path d="M0 0v8l6-4z" fill="#6b6b6b" stroke="none" /></I></HTrack>
      <Slot $w={18}>{null}</Slot>
    </SheetTabs>
    <StatusBar>
      <Slot $w={47} $left><Txt $s={10.500} $ls={-0.05}>Ready</Txt></Slot>
      <Slot $w={30} $left><I w={14} h={12}><path d="M13 4V.5H.5v10H6M.5 3.500H13M3 6h3M3 8.300h2.500" /><circle cx="9.500" cy="8" r="3.500" /><circle cx="9.500" cy="8" r="1.200" fill="#444" /></I></Slot>
      <Slot $w={17} $left><I w={14} h={13}><circle cx="6" cy="2" r="1.500" /><path d="M1 2.500q-.5 1.500 3.500 2.500v3L2 12.500M11.500 2.500q.5 1.500-3.500 2.500v2M4.500 8 6 7l1 1M8 8.500l4.500 4.500M12.500 8.500 8 13" /></I></Slot>
      <Txt $s={10.500} $ls={-0.05}>Accessibility: Investigate</Txt>
      <Fill />
      <ViewCell $on><I w={12} h={12}><path d="M.5.5h11v11H.5zM.5 4h11M.5 8h11M4.200.5v11M8 .5v11" stroke="#222" /></I></ViewCell>
      <ViewCell><I w={13} h={12}><path d="M.5.5h12v11H.5zM3 2.500h7v7H3zM4.500 4.500h4M4.500 6h4M4.500 7.700h4" stroke="#333" /></I></ViewCell>
      <ViewCell><I w={13} h={12}><path d="M.5.5h12v11H.5zM4.500.5v6.500h4.500V.5M.5 7h4" stroke="#333" /></I></ViewCell>
      <Slot $w={14}><I w={7} h={1}><path d="M0 .5h7" /></I></Slot>
      <ZoomTrack><i /><b /></ZoomTrack>
      <I w={7} h={7}><path d="M3.500 0v7M0 3.500h7" /></I>
      <Slot $w={46}><Txt $s={10.300} $ls={-0.1}>80%</Txt></Slot>
    </StatusBar>
  </>
);

const BingIcon = () => (
  <svg width="20" height="20" viewBox="0 0 20 20"><path d="M1.200 18.800V10A8.800 8.800 0 1 1 10 18.800z" fill="#f5f8fc" stroke="#2a6fd6" strokeWidth="1.500" /><path d="M7.500 5v8.500l2.500 1.200 3.500-2.200q.5-2.500-3.500-3.500" fill="none" stroke="#1d8be8" strokeWidth="2.200" strokeLinejoin="round" /></svg>
);
const OfficeTile = ({ k }: { k: "w" | "p" }) => k === "w" ? (
  <svg width="24" height="22" viewBox="0 0 24 22"><rect x="6" width="18" height="22" rx="1.500" fill="#2b7cd3" /><path d="M6 1.500Q6 0 7.500 0h15Q24 0 24 1.500V6H6z" fill="#41a5ee" /><path d="M6 11h18v5.500H6z" fill="#185abd" /><path d="M6 16h18v4.500q0 1.500-1.500 1.500h-15Q6 22 6 20.500z" fill="#103f91" /><rect y="5" width="12.500" height="12.500" rx="1" fill="#185abd" /><path d="M2.500 8l1.800 6.500L6.200 8.500 8 14.500 10 8" stroke="#fff" strokeWidth="1.500" fill="none" /></svg>
) : (
  <svg width="24" height="22" viewBox="0 0 24 22"><circle cx="13" cy="11" r="11" fill="#d35230" /><path d="M13 0a11 11 0 0 1 11 11H13z" fill="#ff8f6b" /><path d="M13 0v11H2.200A11 11 0 0 1 13 0z" fill="#ed6c47" /><rect y="5" width="12.500" height="12.500" rx="1" fill="#c43e1c" /><path d="M4.500 14.800V8h2.300q2.300 0 2.300 2.200T6.800 12.400H4.500" stroke="#fff" strokeWidth="1.600" fill="none" /></svg>
);
const PsFrame = styled.div`
  width: 21px; height: 20px; border-radius: 3px; border: 2px solid #2fa8c8; background: #001e26; color: #d4f3ff;
  font-size: 10.500px; font-weight: 700; display: grid; place-items: center; line-height: 14px; margin-top: 1px;
`;
const apps: [React.ReactNode, number][] = [
  [<svg key="f" width="24" height="22" viewBox="0 0 24 22"><path d="M1 2.500Q1 1 2.500 1H8l2.500 3H1z" fill="#c78a10" /><path d="M1 4.500h7.500L10.500 3H22q1.500 0 1.500 1.500V20q0 1.500-1.500 1.500H2.500Q1 21.500 1 20z" fill="#ffcf48" /><path d="M5 21.500V17q0-2 2-2h10q2 0 2 2v4.500z" fill="#1a73c8" /></svg>, 1],
  [<svg key="c" width="23" height="23" viewBox="0 0 24 24"><circle cx="12" cy="12" r="11.500" fill="#fbc116" /><path d="M2 6.200A11.500 11.500 0 0 1 22 6.200H12L7 15z" fill="#e33b2e" /><path d="M2 6.200 7.200 15l4.800 2.500h3L11 23.500A11.500 11.500 0 0 1 2 6.200z" fill="#2da94f" /><circle cx="12" cy="12" r="5.600" fill="#fff" /><circle cx="12" cy="12" r="4.300" fill="#2f7de1" /><circle cx="17.500" cy="6" r="5.500" fill="#574b45" /><path d="M14 6q3-4 6.500-1l-1.500 4-3-1z" fill="#a89684" /></svg>, 1],
  [<OfficeTile key="w" k="w" />, 0],
  [<svg key="g" width="23" height="22" viewBox="0 0 23 22"><path d="M7 1h15.500v15q0 6-6 6H5Q.5 22 .5 17.500V8Q.5 1 7 1z" fill="#3dbb1e" /><path d="M22.500 1v15q0 6-6 6H9z" fill="#2a9e16" /><path d="M7.500 6.500l8.500 8.500" stroke="#fff" strokeWidth="4" strokeLinecap="round" /><path d="M15 16.500l3 1-1-3z" fill="#fff" /></svg>, 1],
  [<PsFrame key="p">Ps</PsFrame>, 0],
  [<ExcelIcon key="e" s={23} />, 2],
  [<OfficeTile key="o" k="p" />, 1],
  [<svg key="m" width="22" height="23" viewBox="0 0 22 23"><rect width="22" height="23" rx="2.500" fill="#22527a" /><path d="M2 3.500Q9 2 12.500 7.500q2 5 3.500 7l3 3M2 3.500q2.500 3 2.500 6Q3 16 5 18.500q1-3 1-5 3 2 3 4.500M16 18l3-.5M14.500 3l4 3.500M17 2.500 19.500 5M15 5.500l1.500-3" stroke="#c9e0f0" strokeWidth="1.100" fill="none" /></svg>, 1],
];

const Task = () => (
  <TaskBar>
    <Weather>
      <Slot $w={30} $left><I w={24} h={24}><path d="M10 1l2 5.500L17 8l-3 4 .5 6L7 16 1 13l5-3.500L4.500 6l4 .5z" fill="#f5a623" stroke="none" /><path d="M5.500 22.500Q1 22 1 18.500t4.500-4Q7 9.500 12 9.500t6.500 5q4.500 0 4.500 4t-4.500 4z" fill="#b5cdf5" stroke="#86aeea" /></I></Slot>
      <Row $h={42}><Col $t={0}><Txt $s={11} $ls={-0.2}>77°F</Txt><Txt $s={11} $c="#555">Mostly cloudy</Txt><Row $h={2} /></Col></Row>
    </Weather>
    <svg width="23" height="23" viewBox="0 0 23 23"><defs><linearGradient id="win" x1="0" y1="0" x2="1" y2="1"><stop offset="0" stopColor="#4cc8f8" /><stop offset="1" stopColor="#0067c8" /></linearGradient></defs><path d="M1.500.5H11V11H.5V1.500zM12 .5h9.500l1 1V11H12zM.5 12H11v10.500H1.500l-1-1zM12 12h10.500v9.500l-1 1H12z" fill="url(#win)" /></svg>
    <Pill>
      <Slot $w={24} $left><I w={15} h={15}><circle cx="6.500" cy="6.500" r="5.300" stroke="#333" strokeWidth="1.600" /><path d="M10.500 10.500l3.700 3.700" stroke="#333" strokeWidth="1.800" /></I></Slot>
      <Txt $s={12} $c="#666">Search</Txt><Fill /><BingIcon />
    </Pill>
    <Slot $w={43}><svg width="23" height="21" viewBox="0 0 23 21"><path d="M1 6h17v14H1z" fill="#222" /><path d="M7 0h15.500v13H7z" fill="#f2f2f2" opacity=".9" /><path d="M7 6h11v7H7z" fill="#b4b4b4" /></svg></Slot>
    {apps.map(([icon, k], i) => <AppSlot key={i}><Tile $active={k === 2}>{icon}<Mark $k={k} /></Tile></AppSlot>)}
    <Fill />
    <Slot $w={30}><I w={10} h={6}><path d="M.7 5.300 5 .8l4.300 4.500" stroke="#222" strokeWidth="1.200" /></I></Slot>
    <Slot $w={29}><I w={15} h={12}><path d="M.8 4.500q6.700-6.500 13.400 0M3 7q4.500-4.300 9 0M5 9.300q2.500-2.300 5 0" stroke="#222" /><circle cx="7.500" cy="11" r=".9" fill="#222" /></I></Slot>
    <Slot $w={17}><I w={15} h={12}><path d="M.5 4h2.500L6 1v10L3 8H.5zM8 4q1.500 2 0 4M10.300 2.500q2.700 3.500 0 7M12.500 1q4 5 0 10" stroke="#222" /></I></Slot>
    <Slot $w={28}><I w={14} h={10}><rect x=".5" y="1" width="12" height="8" rx="2" stroke="#222" /><path d="M2 2.500h6v5H2z" fill="#222" stroke="none" /><path d="M14 4v2" stroke="#222" /></I></Slot>
    <Clock><Txt $s={11} $ls={-0.05}>9:12 PM</Txt><Txt $s={11}>4/16/2023</Txt></Clock>
    <Slot $w={41} $left><Row $h={20} $l={8}><I w={13} h={13}><path d="M7 1.500Q3 1.500 3 5v3L1 10.500h10.500L10 8.500M5 12.500h3M5.500 5h2.500l-2.500 3h2.500M9.500.5h3l-3 3.500h3" stroke="#222" /></I></Row></Slot>
  </TaskBar>
);

export default function App() {
  return (
    <>
      <Global />
      <Window>
        <Title /><Tabs /><RibbonView /><Formula /><Sheet /><Bottom /><Task />
      </Window>
    </>
  );
}
